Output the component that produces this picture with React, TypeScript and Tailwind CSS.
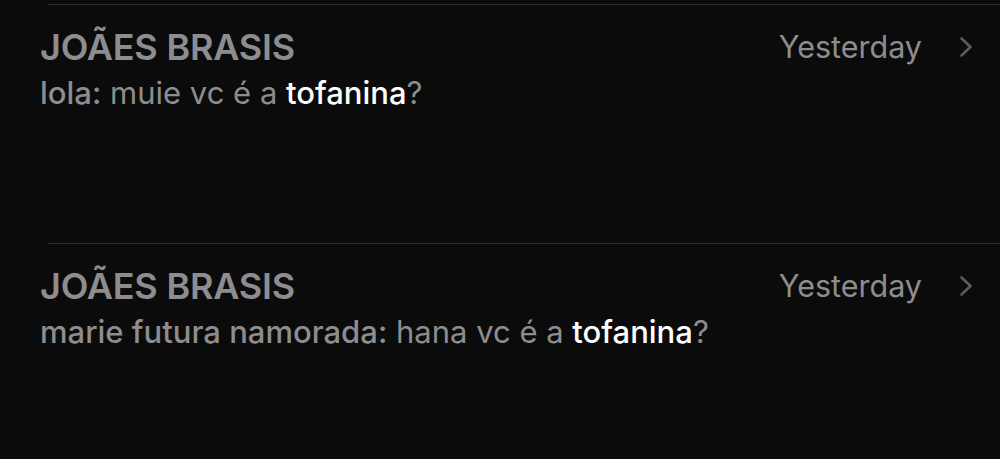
const rows = [
  { title: 'JOÃES BRASIS', sender: 'lola', text: 'muie vc é a ', hit: 'tofanina', after: '?', time: 'Yesterday' },
  { title: 'JOÃES BRASIS', sender: 'marie futura namorada', text: 'hana vc é a ', hit: 'tofanina', after: '?', time: 'Yesterday' },
];

function Chevron() {
  return (
    <svg width="14" height="22" viewBox="0 0 14 22" fill="none">
      <path d="M2.5 2.5 L11.5 11 L2.5 19.5" stroke="#5c5c5e" strokeWidth="2.6" strokeLinecap="round" strokeLinejoin="round" />
    </svg>
  );
}

export default function App() {
  return (
    <div className="w-[1000px] h-[459px] bg-[#0b0b0b] overflow-hidden pt-1" style={{ fontFamily: 'Inter, "Noto Sans", sans-serif' }}>
      {rows.map((r, i) => (
        <div key={i} className="h-[239px]">
          <div className="ml-12 h-px bg-[#2c2c2e]" />
          <div className="pl-10 pr-[27px] pt-[19px]">
            <div className="flex items-center">
              <div className="flex-1 text-[36px] font-semibold text-[#8d8d8f] leading-[46px] tracking-[-0.2px]">{r.title}</div>
              <div className="text-[30.5px] text-[#8d8d8f] leading-[46px]">{r.time}</div>
              <div className="ml-[37px] flex items-center"><Chevron /></div>
            </div>
            <div className="text-[31px] text-[#8d8d8f] leading-[42px] mt-[2px]">
              <span className="font-medium">{r.sender}:</span> {r.text}
              <span className="font-medium text-white">{r.hit}</span>{r.after}
            </div>
          </div>
        </div>
      ))}
    </div>
  );
}
